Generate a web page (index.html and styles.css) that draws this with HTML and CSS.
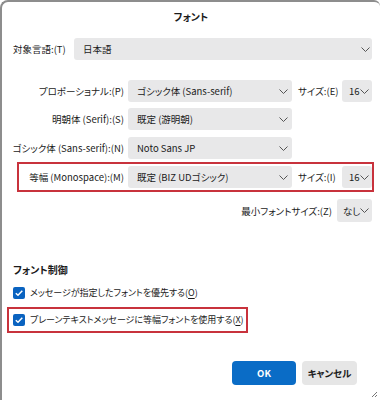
FILE: index.html
```html
<!DOCTYPE html>
<html lang="ja">
<head>
<meta charset="utf-8">
<link rel="stylesheet" href="styles.css">
</head>
<body>
<div class="win">
  <div class="title">フォント</div>

  <div class="lang-row">
    <span class="lbl">対象言語:(T)</span>
    <div class="sel"><span>日本語</span><svg class="chev" viewBox="0 0 9 5"><path d="M0.5 0.5 L4.5 4.5 L8.5 0.5"/></svg></div>
  </div>

  <div class="frow r-prop">
    <span class="lbl right">プロポーショナル:(P)</span>
    <div class="sel"><span>ゴシック体 (Sans-serif)</span><svg class="chev" viewBox="0 0 9 5"><path d="M0.5 0.5 L4.5 4.5 L8.5 0.5"/></svg></div>
    <span class="lbl size-lbl">サイズ:(E)</span>
    <div class="sel small"><span>16</span><svg class="chev" viewBox="0 0 9 5"><path d="M0.5 0.5 L4.5 4.5 L8.5 0.5"/></svg></div>
  </div>

  <div class="frow r-serif">
    <span class="lbl right">明朝体 (Serif):(S)</span>
    <div class="sel"><span>既定 (游明朝)</span><svg class="chev" viewBox="0 0 9 5"><path d="M0.5 0.5 L4.5 4.5 L8.5 0.5"/></svg></div>
  </div>

  <div class="frow r-sans">
    <span class="lbl right">ゴシック体 (Sans-serif):(N)</span>
    <div class="sel"><span>Noto Sans JP</span><svg class="chev" viewBox="0 0 9 5"><path d="M0.5 0.5 L4.5 4.5 L8.5 0.5"/></svg></div>
  </div>

  <div class="frow r-mono">
    <span class="lbl right">等幅 (Monospace):(M)</span>
    <div class="sel"><span>既定 (BIZ UDゴシック)</span><svg class="chev" viewBox="0 0 9 5"><path d="M0.5 0.5 L4.5 4.5 L8.5 0.5"/></svg></div>
    <span class="lbl size-lbl">サイズ:(I)</span>
    <div class="sel small"><span>16</span><svg class="chev" viewBox="0 0 9 5"><path d="M0.5 0.5 L4.5 4.5 L8.5 0.5"/></svg></div>
  </div>

  <div class="min-row">
    <span class="lbl">最小フォントサイズ:(Z)</span>
    <div class="sel min"><span>なし</span><svg class="chev" viewBox="0 0 9 5"><path d="M0.5 0.5 L4.5 4.5 L8.5 0.5"/></svg></div>
  </div>

  <div class="heading">フォント制御</div>

  <label class="cb-row cb1">
    <span class="cb"><svg viewBox="0 0 12 12"><path d="M2.8 6.2 L5 8.3 L9.3 3.8"/></svg></span>
    <span class="cb-text">メッセージが指定したフォントを優先する(<u>O</u>)</span>
  </label>

  <label class="cb-row cb2">
    <span class="cb"><svg viewBox="0 0 12 12"><path d="M2.8 6.2 L5 8.3 L9.3 3.8"/></svg></span>
    <span class="cb-text">プレーンテキストメッセージに等幅フォントを使用する(<u>X</u>)</span>
  </label>

  <div class="buttons">
    <div class="btn ok">OK</div>
    <div class="btn cancel">キャンセル</div>
  </div>

  <svg class="grip" viewBox="0 0 8 8"><path d="M7 2 L2 7 M7 5 L5 7"/></svg>
</div>
</body>
</html>
```

FILE: styles.css
```css
html, body {
  margin: 0;
  padding: 0;
  background: #fff;
}

.win {
  position: relative;
  width: 380px;
  height: 400px;
  box-sizing: border-box;
  border-left: 2px solid #8d8d8d;
  border-top: 2px solid #8d8d8d;
  border-top-left-radius: 8px;
  border-top-right-radius: 6px;
  background: #fff;
  font-family: "Noto Sans CJK JP", "Noto Sans", sans-serif;
  font-feature-settings: "palt" 1;
  font-size: 9.5px;
  line-height: 16px;
  color: #1b1b1b;
  display: flex;
  flex-direction: column;
  overflow: hidden;
}

.title {
  padding-top: 7px;
  text-align: center;
  font-weight: bold;
  font-size: 10px;
  height: 16px;
}

.lbl {
  white-space: nowrap;
}

.right {
  text-align: right;
  padding-right: 4px;
}

.sel {
  box-sizing: border-box;
  height: 22px;
  background: #e8e8e9;
  border-radius: 3px;
  display: flex;
  align-items: center;
  justify-content: space-between;
  padding: 0 4px 0 9px;
  white-space: nowrap;
}

.chev {
  width: 9px;
  height: 5px;
  flex: none;
  fill: none;
  stroke: #555;
  stroke-width: 1;
}

.lang-row {
  margin-top: 13px;
  margin-left: 11px;
  margin-right: 8px;
  display: grid;
  grid-template-columns: 61px 1fr;
  align-items: center;
}

.lang-row .sel {
  padding-right: 2px;
}

.frow {
  display: grid;
  grid-template-columns: 126px 164px 50px 30px;
  align-items: center;
}

.size-lbl {
  padding-left: 6px;
}

.sel.small {
  padding: 0 3px 0 7px;
}

.r-prop { margin-top: 20px; }
.r-serif { margin-top: 6px; }
.r-sans { margin-top: 7px; }

.r-mono {
  margin-top: 3px;
  margin-left: 15px;
  margin-right: 6px;
  border: 2px solid #c8323c;
  padding: 2px 0;
  grid-template-columns: 109px 164px 50px 30px;
}

.min-row {
  margin-top: 7px;
  margin-right: 8px;
  display: flex;
  justify-content: flex-end;
  align-items: center;
  gap: 5px;
}

.sel.min {
  width: 35px;
  height: 23px;
  padding: 0 3px 0 6px;
}

.heading {
  margin-top: 40px;
  margin-left: 11px;
  font-weight: bold;
  font-size: 10px;
}

.cb-row {
  display: flex;
  align-items: center;
  gap: 5px;
  white-space: nowrap;
}

.cb-text {
  font-size: 9px;
  letter-spacing: -0.05px;
}

.cb {
  width: 12px;
  height: 12px;
  border-radius: 2px;
  background: #0a63c0;
  display: flex;
  flex: none;
}

.cb svg {
  width: 12px;
  height: 12px;
  fill: none;
  stroke: #fff;
  stroke-width: 1.5;
}

.cb1 {
  margin-top: 7px;
  margin-left: 11px;
}

.cb2 {
  margin-top: 6px;
  margin-left: 5px;
  align-self: flex-start;
  border: 2px solid #c8323c;
  padding: 3px 3px 3px 4px;
}

u {
  text-underline-offset: 2px;
}

.buttons {
  margin-top: 28px;
  margin-right: 23px;
  display: flex;
  justify-content: flex-end;
  gap: 6px;
}

.btn {
  height: 24px;
  border-radius: 4px;
  display: flex;
  align-items: center;
  justify-content: center;
  font-weight: bold;
  font-size: 9.5px;
}

.ok {
  width: 64px;
  background: #0a6cc6;
  color: #fff;
}

.cancel {
  width: 55px;
  background: #e6e6e6;
  color: #1b1b1b;
}

.grip {
  position: absolute;
  right: 2px;
  bottom: 2px;
  width: 8px;
  height: 8px;
  fill: none;
  stroke: #777;
  stroke-width: 1;
}
```
